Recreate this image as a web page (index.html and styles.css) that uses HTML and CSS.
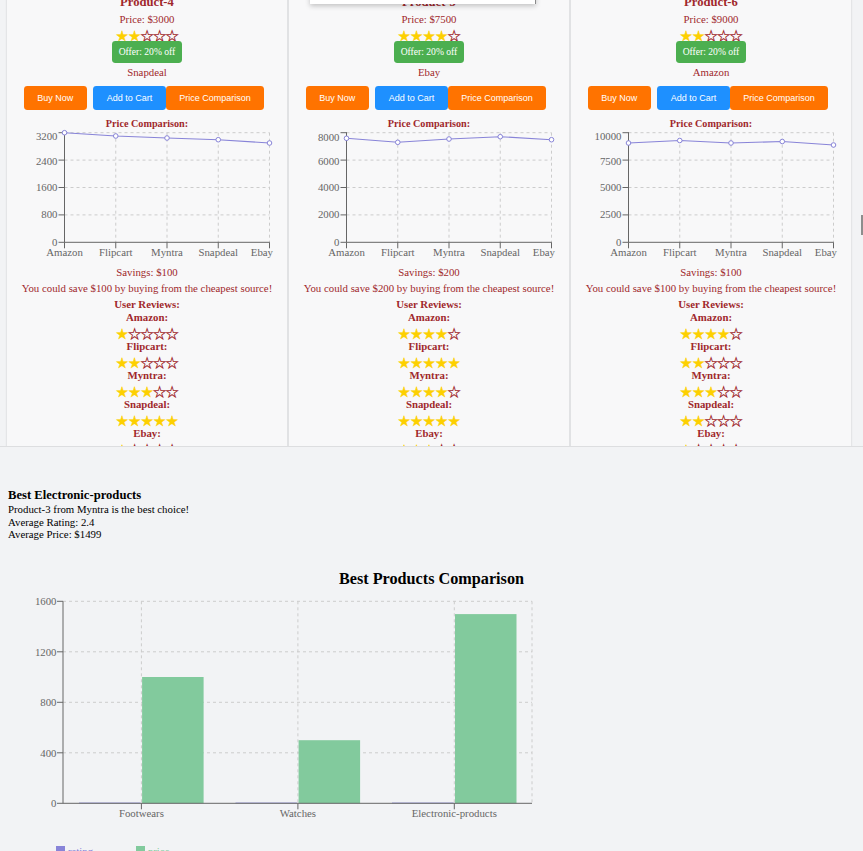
FILE: index.html
```html
<!DOCTYPE html>
<html lang="en">
<head>
<meta charset="utf-8">
<title>Products</title>
<link rel="stylesheet" href="styles.css">
</head>
<body>
<svg class="defs" aria-hidden="true">
  <defs>
    <g id="lc-frame" font-family="Liberation Serif, serif" font-size="10.8" fill="#666">
      <g stroke="#ccc" stroke-dasharray="3 3" fill="none">
        <line x1="57.5" y1="2.7" x2="262.5" y2="2.7"/>
        <line x1="57.5" y1="30.1" x2="262.5" y2="30.1"/>
        <line x1="57.5" y1="57.5" x2="262.5" y2="57.5"/>
        <line x1="57.5" y1="84.9" x2="262.5" y2="84.9"/>
        <line x1="108.75" y1="2.7" x2="108.75" y2="112.3"/>
        <line x1="160" y1="2.7" x2="160" y2="112.3"/>
        <line x1="211.25" y1="2.7" x2="211.25" y2="112.3"/>
        <line x1="262.5" y1="2.7" x2="262.5" y2="112.3"/>
      </g>
      <g stroke="#666" fill="none">
        <line x1="57.5" y1="2.2" x2="57.5" y2="112.3"/>
        <line x1="57.5" y1="112.3" x2="262.5" y2="112.3"/>
        <line x1="51.5" y1="2.7" x2="57.5" y2="2.7"/>
        <line x1="51.5" y1="30.1" x2="57.5" y2="30.1"/>
        <line x1="51.5" y1="57.5" x2="57.5" y2="57.5"/>
        <line x1="51.5" y1="84.9" x2="57.5" y2="84.9"/>
        <line x1="51.5" y1="112.3" x2="57.5" y2="112.3"/>
        <line x1="57.5" y1="112.3" x2="57.5" y2="118.3"/>
        <line x1="108.75" y1="112.3" x2="108.75" y2="118.3"/>
        <line x1="160" y1="112.3" x2="160" y2="118.3"/>
        <line x1="211.25" y1="112.3" x2="211.25" y2="118.3"/>
        <line x1="262.5" y1="112.3" x2="262.5" y2="118.3"/>
      </g>
      <g text-anchor="middle">
        <text x="57.5" y="125.5">Amazon</text>
        <text x="108.75" y="125.5">Flipcart</text>
        <text x="160" y="125.5">Myntra</text>
        <text x="211.25" y="125.5">Snapdeal</text>
        <text x="266" y="125.5" text-anchor="end">Ebay</text>
      </g>
    </g>
  </defs>
</svg>

<div class="products">
  <div class="grid">

    <div class="card">
      <h3 class="title">Product-4</h3>
      <div class="price">Price: $3000</div>
      <div class="stars"><span class="on">★★</span><span class="off">★★★</span></div>
      <div class="offer">Offer: 20% off</div>
      <div class="src">Snapdeal</div>
      <div class="btns">
        <button class="btn buy">Buy Now</button>
        <button class="btn cart">Add to Cart</button>
        <button class="btn cmp">Price Comparison</button>
      </div>
      <div class="pc-label">Price Comparison:</div>
      <svg class="lc" viewBox="0 0 280 136">
        <use href="#lc-frame"/>
        <g font-family="Liberation Serif, serif" font-size="10.8" fill="#666" text-anchor="end">
          <text x="50.5" y="9.5">3200</text>
          <text x="50.5" y="34.5">2400</text>
          <text x="50.5" y="61.1">1600</text>
          <text x="50.5" y="88.1">800</text>
          <text x="50.5" y="116.1">0</text>
        </g>
        <polyline class="ln" points="57.5,2.7 108.75,6 160,8 211.25,9.7 262.5,13"/>
        <g class="dots">
          <circle cx="57.5" cy="2.7" r="2.3"/><circle cx="108.75" cy="6" r="2.3"/><circle cx="160" cy="8" r="2.3"/><circle cx="211.25" cy="9.7" r="2.3"/><circle cx="262.5" cy="13" r="2.3"/>
        </g>
      </svg>
      <div class="sav">Savings: $100</div>
      <div class="save">You could save $100 by buying from the cheapest source!</div>
      <div class="ur">User Reviews:</div>
      <div class="rv">Amazon:</div>
      <div class="rstars"><span class="on">★</span><span class="off">★★★★</span></div>
      <div class="rv">Flipcart:</div>
      <div class="rstars"><span class="on">★★</span><span class="off">★★★</span></div>
      <div class="rv">Myntra:</div>
      <div class="rstars"><span class="on">★★★</span><span class="off">★★</span></div>
      <div class="rv">Snapdeal:</div>
      <div class="rstars"><span class="on">★★★★★</span></div>
      <div class="rv">Ebay:</div>
      <div class="rstars"><span class="on">★</span><span class="off">★★★★</span></div>
    </div>

    <div class="card">
      <h3 class="title">Product-5</h3>
      <div class="price">Price: $7500</div>
      <div class="stars"><span class="on">★★★★</span><span class="off">★</span></div>
      <div class="offer">Offer: 20% off</div>
      <div class="src">Ebay</div>
      <div class="btns">
        <button class="btn buy">Buy Now</button>
        <button class="btn cart">Add to Cart</button>
        <button class="btn cmp">Price Comparison</button>
      </div>
      <div class="pc-label">Price Comparison:</div>
      <svg class="lc" viewBox="0 0 280 136">
        <use href="#lc-frame"/>
        <g font-family="Liberation Serif, serif" font-size="10.8" fill="#666" text-anchor="end">
          <text x="50.5" y="10.5">8000</text>
          <text x="50.5" y="34.5">6000</text>
          <text x="50.5" y="61.1">4000</text>
          <text x="50.5" y="88.1">2000</text>
          <text x="50.5" y="116.1">0</text>
        </g>
        <polyline class="ln" points="57.5,8.3 108.75,12.3 160,9 211.25,6.7 262.5,9.7"/>
        <g class="dots">
          <circle cx="57.5" cy="8.3" r="2.3"/><circle cx="108.75" cy="12.3" r="2.3"/><circle cx="160" cy="9" r="2.3"/><circle cx="211.25" cy="6.7" r="2.3"/><circle cx="262.5" cy="9.7" r="2.3"/>
        </g>
      </svg>
      <div class="sav">Savings: $200</div>
      <div class="save">You could save $200 by buying from the cheapest source!</div>
      <div class="ur">User Reviews:</div>
      <div class="rv">Amazon:</div>
      <div class="rstars"><span class="on">★★★★</span><span class="off">★</span></div>
      <div class="rv">Flipcart:</div>
      <div class="rstars"><span class="on">★★★★★</span></div>
      <div class="rv">Myntra:</div>
      <div class="rstars"><span class="on">★★★★</span><span class="off">★</span></div>
      <div class="rv">Snapdeal:</div>
      <div class="rstars"><span class="on">★★★★★</span></div>
      <div class="rv">Ebay:</div>
      <div class="rstars"><span class="on">★★★</span><span class="off">★★</span></div>
    </div>

    <div class="card">
      <h3 class="title">Product-6</h3>
      <div class="price">Price: $9000</div>
      <div class="stars"><span class="on">★★</span><span class="off">★★★</span></div>
      <div class="offer">Offer: 20% off</div>
      <div class="src">Amazon</div>
      <div class="btns">
        <button class="btn buy">Buy Now</button>
        <button class="btn cart">Add to Cart</button>
        <button class="btn cmp">Price Comparison</button>
      </div>
      <div class="pc-label">Price Comparison:</div>
      <svg class="lc" viewBox="0 0 280 136">
        <use href="#lc-frame"/>
        <g font-family="Liberation Serif, serif" font-size="10.8" fill="#666" text-anchor="end">
          <text x="50.5" y="10">10000</text>
          <text x="50.5" y="34.5">7500</text>
          <text x="50.5" y="61.1">5000</text>
          <text x="50.5" y="88.1">2500</text>
          <text x="50.5" y="116.1">0</text>
        </g>
        <polyline class="ln" points="57.5,13 108.75,10.5 160,13 211.25,11.5 262.5,15"/>
        <g class="dots">
          <circle cx="57.5" cy="13" r="2.3"/><circle cx="108.75" cy="10.5" r="2.3"/><circle cx="160" cy="13" r="2.3"/><circle cx="211.25" cy="11.5" r="2.3"/><circle cx="262.5" cy="15" r="2.3"/>
        </g>
      </svg>
      <div class="sav">Savings: $100</div>
      <div class="save">You could save $100 by buying from the cheapest source!</div>
      <div class="ur">User Reviews:</div>
      <div class="rv">Amazon:</div>
      <div class="rstars"><span class="on">★★★★</span><span class="off">★</span></div>
      <div class="rv">Flipcart:</div>
      <div class="rstars"><span class="on">★★</span><span class="off">★★★</span></div>
      <div class="rv">Myntra:</div>
      <div class="rstars"><span class="on">★★★</span><span class="off">★★</span></div>
      <div class="rv">Snapdeal:</div>
      <div class="rstars"><span class="on">★★</span><span class="off">★★★</span></div>
      <div class="rv">Ebay:</div>
      <div class="rstars"><span class="on">★</span><span class="off">★★★★</span></div>
    </div>

  </div>
  <div class="popup"></div>
  <div class="sbar"></div>
</div>

<section class="best">
  <h3>Best Electronic-products</h3>
  <p>Product-3 from Myntra is the best choice!</p>
  <p>Average Rating: 2.4</p>
  <p>Average Price: $1499</p>
</section>

<section class="compare">
  <h2>Best Products Comparison</h2>
  <svg class="bc" viewBox="0 0 863 236">
    <g stroke="#ccc" stroke-dasharray="3 3" fill="none">
      <line x1="63" y1="12.3" x2="532" y2="12.3"/>
      <line x1="63" y1="62.8" x2="532" y2="62.8"/>
      <line x1="63" y1="113.3" x2="532" y2="113.3"/>
      <line x1="63" y1="163.8" x2="532" y2="163.8"/>
      <line x1="141.4" y1="12.3" x2="141.4" y2="214.3"/>
      <line x1="297.9" y1="12.3" x2="297.9" y2="214.3"/>
      <line x1="454.3" y1="12.3" x2="454.3" y2="214.3"/>
      <line x1="532" y1="12.3" x2="532" y2="214.3"/>
    </g>
    <g fill="#82ca9d">
      <rect x="142.1" y="88" width="61.5" height="126.3"/>
      <rect x="298.6" y="151.2" width="61.5" height="63.1"/>
      <rect x="455" y="25.1" width="61.5" height="189.2"/>
    </g>
    <g fill="#8884d8">
      <rect x="79" y="213.6" width="61.4" height="0.7"/>
      <rect x="235.5" y="213.6" width="61.4" height="0.7"/>
      <rect x="392" y="213.6" width="61.4" height="0.7"/>
    </g>
    <g stroke="#666" fill="none">
      <line x1="63" y1="12.3" x2="63" y2="214.3"/>
      <line x1="63" y1="214.3" x2="532" y2="214.3"/>
      <line x1="57" y1="12.3" x2="63" y2="12.3"/>
      <line x1="57" y1="62.8" x2="63" y2="62.8"/>
      <line x1="57" y1="113.3" x2="63" y2="113.3"/>
      <line x1="57" y1="163.8" x2="63" y2="163.8"/>
      <line x1="57" y1="214.3" x2="63" y2="214.3"/>
      <line x1="141.4" y1="214.3" x2="141.4" y2="220.3"/>
      <line x1="297.9" y1="214.3" x2="297.9" y2="220.3"/>
      <line x1="454.3" y1="214.3" x2="454.3" y2="220.3"/>
    </g>
    <g font-family="Liberation Serif, serif" font-size="10.8" fill="#666">
      <g text-anchor="end">
        <text x="56.5" y="16.1">1600</text>
        <text x="56.5" y="66.6">1200</text>
        <text x="56.5" y="117.1">800</text>
        <text x="56.5" y="167.6">400</text>
        <text x="56.5" y="218.1">0</text>
      </g>
      <g text-anchor="middle">
        <text x="141.4" y="227.5">Footwears</text>
        <text x="297.9" y="227.5">Watches</text>
        <text x="454.3" y="227.5">Electronic-products</text>
      </g>
    </g>
  </svg>
  <div class="legend">
    <div class="li rating"><span class="ico"></span>rating</div>
    <div class="li pricel"><span class="ico"></span>price</div>
  </div>
</section>
</body>
</html>
```

FILE: styles.css
```css
* { box-sizing: border-box; }
html, body { margin: 0; padding: 0; }
body {
  width: 863px;
  height: 851px;
  overflow: hidden;
  background: #f2f3f5;
  font-family: "Liberation Serif", "Times New Roman", serif;
  font-size: 10.8px;
  color: #000;
}
.defs { display: block; width: 0; height: 0; position: absolute; overflow: hidden; }

/* product scroller */
.products {
  position: relative;
  height: 447px;
  overflow: hidden;
  border-bottom: 1px solid #dddee0;
}
.grid {
  display: flex;
  gap: 2px;
  padding-left: 7px;
  margin-top: -5px;
}
.card {
  width: 280px;
  flex: none;
  height: 520px;
  background: #f8f8f9;
  box-shadow: 0 0 2px rgba(0, 0, 0, 0.18);
  color: #a0282c;
  display: flex;
  flex-direction: column;
  align-items: center;
  text-align: center;
}
.title { margin: 0; font-size: 12.64px; font-weight: bold; line-height: 15px; }
.price { margin-top: 2.6px; line-height: 13px; }
.stars, .rstars {
  font-family: "DejaVu Sans", sans-serif;
  font-size: 14.2px;
  letter-spacing: -0.25px;
}
.stars { margin-top: 1.4px; line-height: 10px; padding-top: 4px; }
.rstars { line-height: 12px; padding-top: 4px; }
.on { color: #fdd000; -webkit-text-stroke: 0.4px #fdd000; }
.off { color: transparent; -webkit-text-stroke: 0.85px #a0282c; }
.offer {
  background: #4caf50;
  color: #fff;
  font-size: 9.6px;
  line-height: 11px;
  padding: 5.4px 6.4px;
  border-radius: 3.4px;
}
.src { margin-top: 3.5px; line-height: 13px; }
.btns {
  display: flex;
  align-self: flex-start;
  margin: 6.6px 0 0 16.7px;
}
.btn {
  font-family: "Liberation Sans", Arial, sans-serif;
  font-size: 9px;
  line-height: 10.8px;
  padding: 6.75px 13.5px;
  border: 0;
  border-radius: 3.4px;
  color: #fff;
  margin: 0;
}
.buy { background: #ff7300; margin-right: 6.6px; }
.cart { background: #1e90ff; }
.cmp { background: #ff7300; }
.pc-label { margin-top: 7.4px; font-weight: bold; font-size: 10.2px; line-height: 12px; }
.lc { display: block; width: 280px; height: 136px; overflow: visible; }
.lc .ln { fill: none; stroke: #8884d8; stroke-width: 1.1; }
.lc .dots circle { fill: #fff; stroke: #8884d8; stroke-width: 1; }
.sav { margin-top: 0.5px; line-height: 13px; }
.save { margin-top: 3px; line-height: 13px; }
.ur { margin-top: 3.2px; font-weight: bold; line-height: 13px; }
.rv { font-weight: bold; line-height: 13px; }

.popup {
  position: absolute;
  left: 310px;
  top: -20px;
  width: 226px;
  height: 23.5px;
  background: #fff;
  border-right: 1px solid #8a8a8a;
  box-shadow: 0 2px 5px rgba(0, 0, 0, 0.22);
}
.sbar {
  position: absolute;
  left: 861px;
  top: 215px;
  width: 2px;
  height: 20px;
  background: #8d8d8d;
}

/* best product summary */
.best { margin-top: 40.7px; padding: 0 8px; }
.best h3 { margin: 0 0 1px; font-size: 12.64px; font-weight: bold; line-height: 14.5px; }
.best p { margin: 0; line-height: 12.5px; }

/* comparison chart */
.compare { margin-top: 29px; }
.compare h2 {
  margin: 0;
  text-align: center;
  font-size: 16.2px;
  font-weight: bold;
  line-height: 19px;
}
.bc { display: block; width: 863px; height: 236px; }
.legend {
  display: flex;
  margin-top: 20px;
  padding-left: 56px;
  line-height: 12.5px;
}
.li { display: flex; align-items: flex-start; }
.li .ico { width: 9.45px; height: 9.45px; margin: 1.7px 2.45px 0 0; }
.rating { width: 80px; color: #8884d8; }
.rating .ico { background: #8884d8; }
.pricel { color: #82ca9d; }
.pricel .ico { background: #82ca9d; }
```
